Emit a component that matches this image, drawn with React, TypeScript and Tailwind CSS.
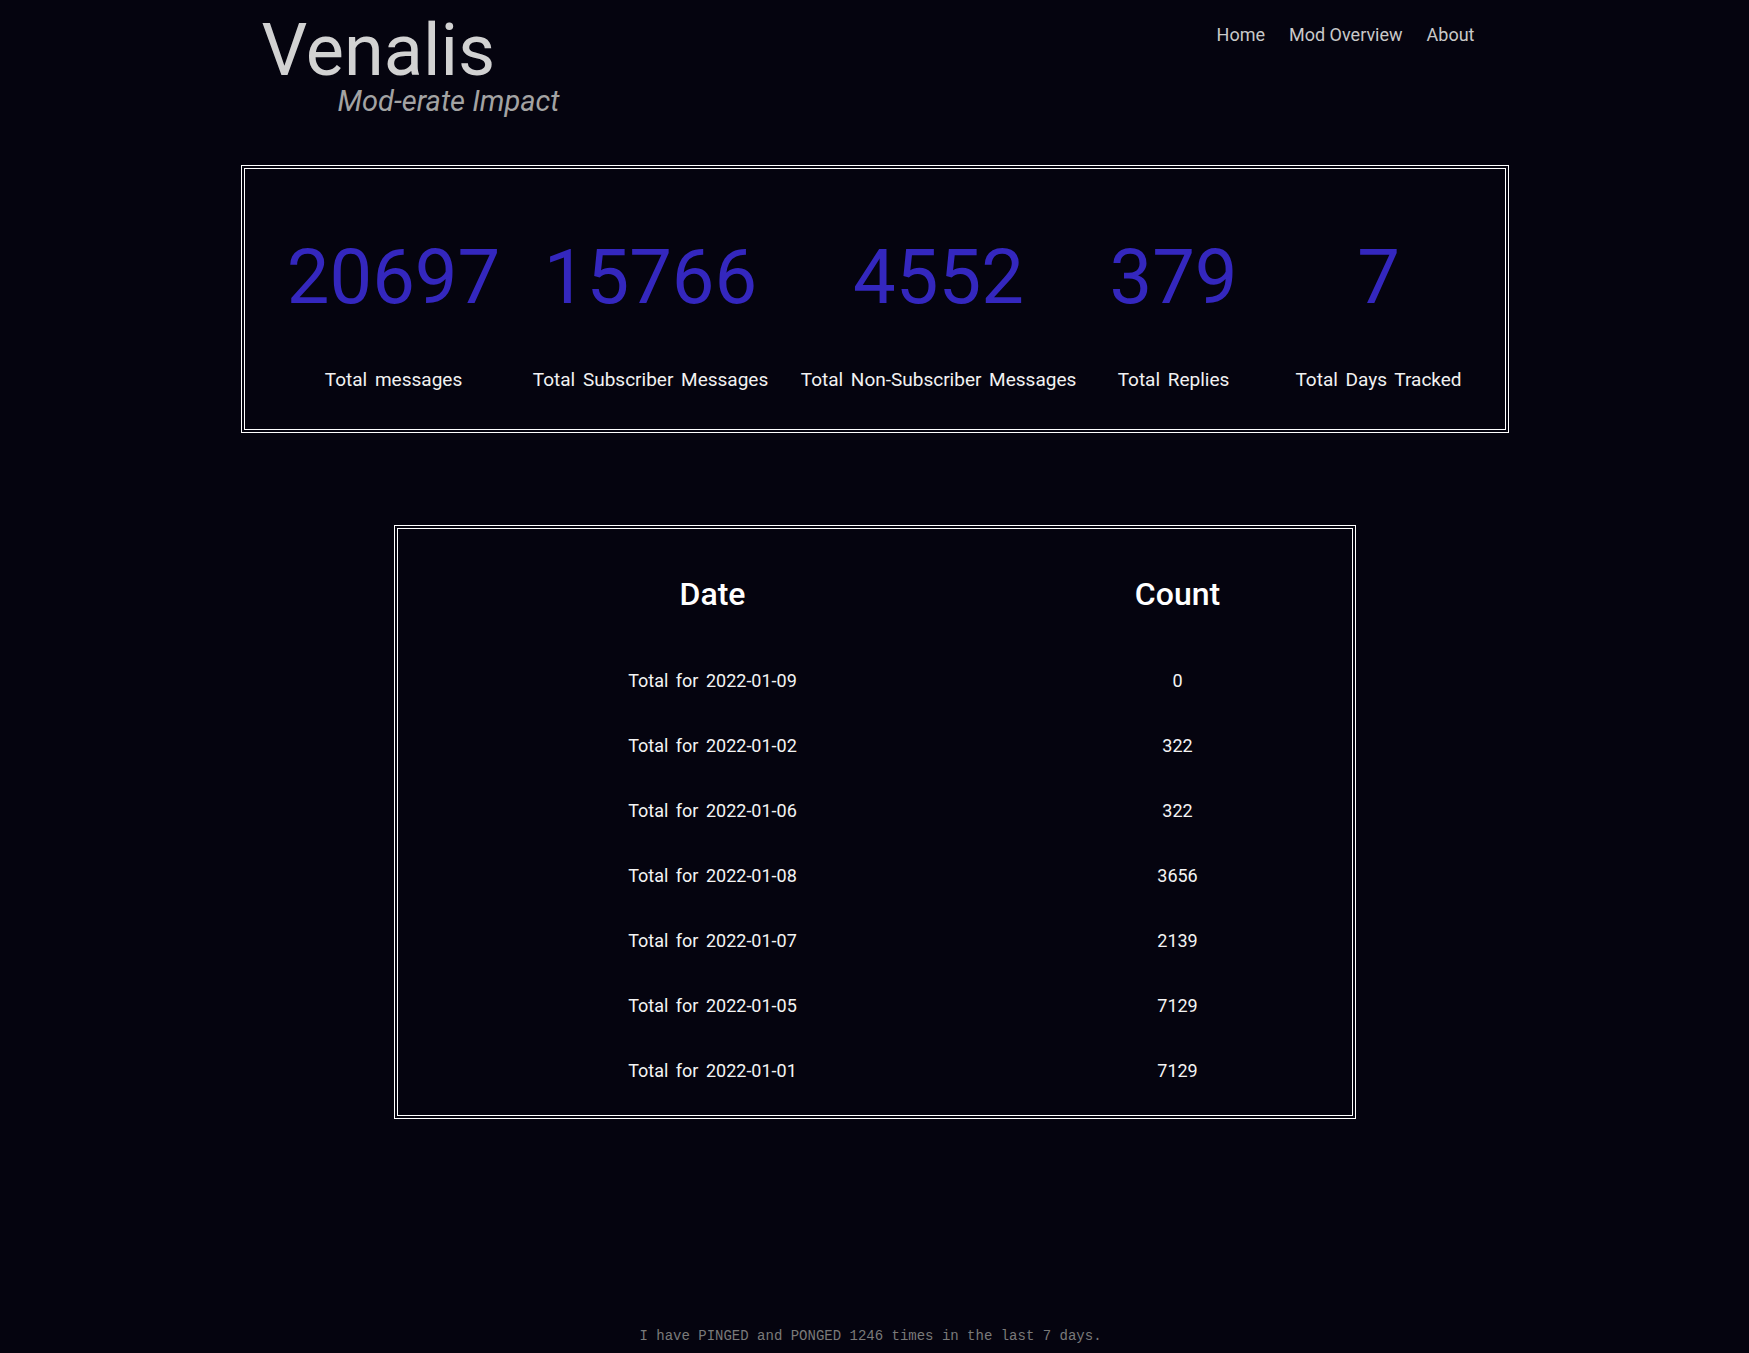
import React from "react"

interface Stat {
  value: string
  label: string
}

const stats: Stat[] = [
  { value: "20697", label: "Total messages" },
  { value: "15766", label: "Total Subscriber Messages" },
  { value: "4552", label: "Total Non-Subscriber Messages" },
  { value: "379", label: "Total Replies" },
  { value: "7", label: "Total Days Tracked" },
]

const totals: [string, string][] = [
  ["2022-01-09", "0"],
  ["2022-01-02", "322"],
  ["2022-01-06", "322"],
  ["2022-01-08", "3656"],
  ["2022-01-07", "2139"],
  ["2022-01-05", "7129"],
  ["2022-01-01", "7129"],
]

const navLinks = ["Home", "Mod Overview", "About"]

export default function App() {
  return (
    <div className="min-h-screen flex flex-col bg-[#05040f] font-[Roboto,sans-serif] text-white">
      {/* header */}
      <header className="w-[1268px] mx-auto flex justify-between items-start pt-[15px]">
        <div className="pl-[21px]">
          <h1 className="text-[72px] leading-none font-normal text-[#d2d2d2]">Venalis</h1>
          <p className="pl-[76px] text-[29px] leading-[28px] italic text-[#a3a3a3]">Mod-erate Impact</p>
        </div>
        <nav className="flex gap-[24px] mt-[11px] pr-[34px] text-[18px] leading-none text-[#c9c9c9]">
          {navLinks.map((link) => (
            <a key={link} href="#" className="hover:text-white">
              {link}
            </a>
          ))}
        </nav>
      </header>

      {/* stats */}
      <section className="w-[1268px] mx-auto mt-[50px] border-4 border-double border-white pt-[70px] pb-[37px] pl-[34px]">
        <div className="grid grid-cols-[230px_284px_292px_178px_232px]">
          {stats.map((stat) => (
            <div key={stat.label} className="flex flex-col items-center">
              <span className="text-[76px] leading-none text-[#3427be]">{stat.value}</span>
              <span className="mt-[53px] text-[19px] leading-[24px] text-[#f2f2f2] [word-spacing:3px] whitespace-nowrap">
                {stat.label}
              </span>
            </div>
          ))}
        </div>
      </section>

      {/* daily totals */}
      <section className="w-[962px] mx-auto mt-[92px] border-4 border-double border-white pt-[32px] pb-[12px]">
        <div className="grid grid-cols-[630px_300px] h-[65px] items-center text-[32px] font-medium leading-none">
          <span className="text-center">Date</span>
          <span className="text-center">Count</span>
        </div>
        <div className="mt-[22px]">
          {totals.map(([date, count]) => (
            <div key={date} className="grid grid-cols-[630px_300px] h-[65px] items-center text-[18px] leading-none text-[#f4f4f4] [word-spacing:3px]">
              <span className="text-center">Total for {date}</span>
              <span className="text-center">{count}</span>
            </div>
          ))}
        </div>
      </section>

      <footer className="mt-auto pb-[7px] pr-[8px] text-center font-['Liberation_Mono',monospace] text-[14px] leading-5 text-[#7a7a7a]">
        I have PINGED and PONGED 1246 times in the last 7 days.
      </footer>
    </div>
  )
}
